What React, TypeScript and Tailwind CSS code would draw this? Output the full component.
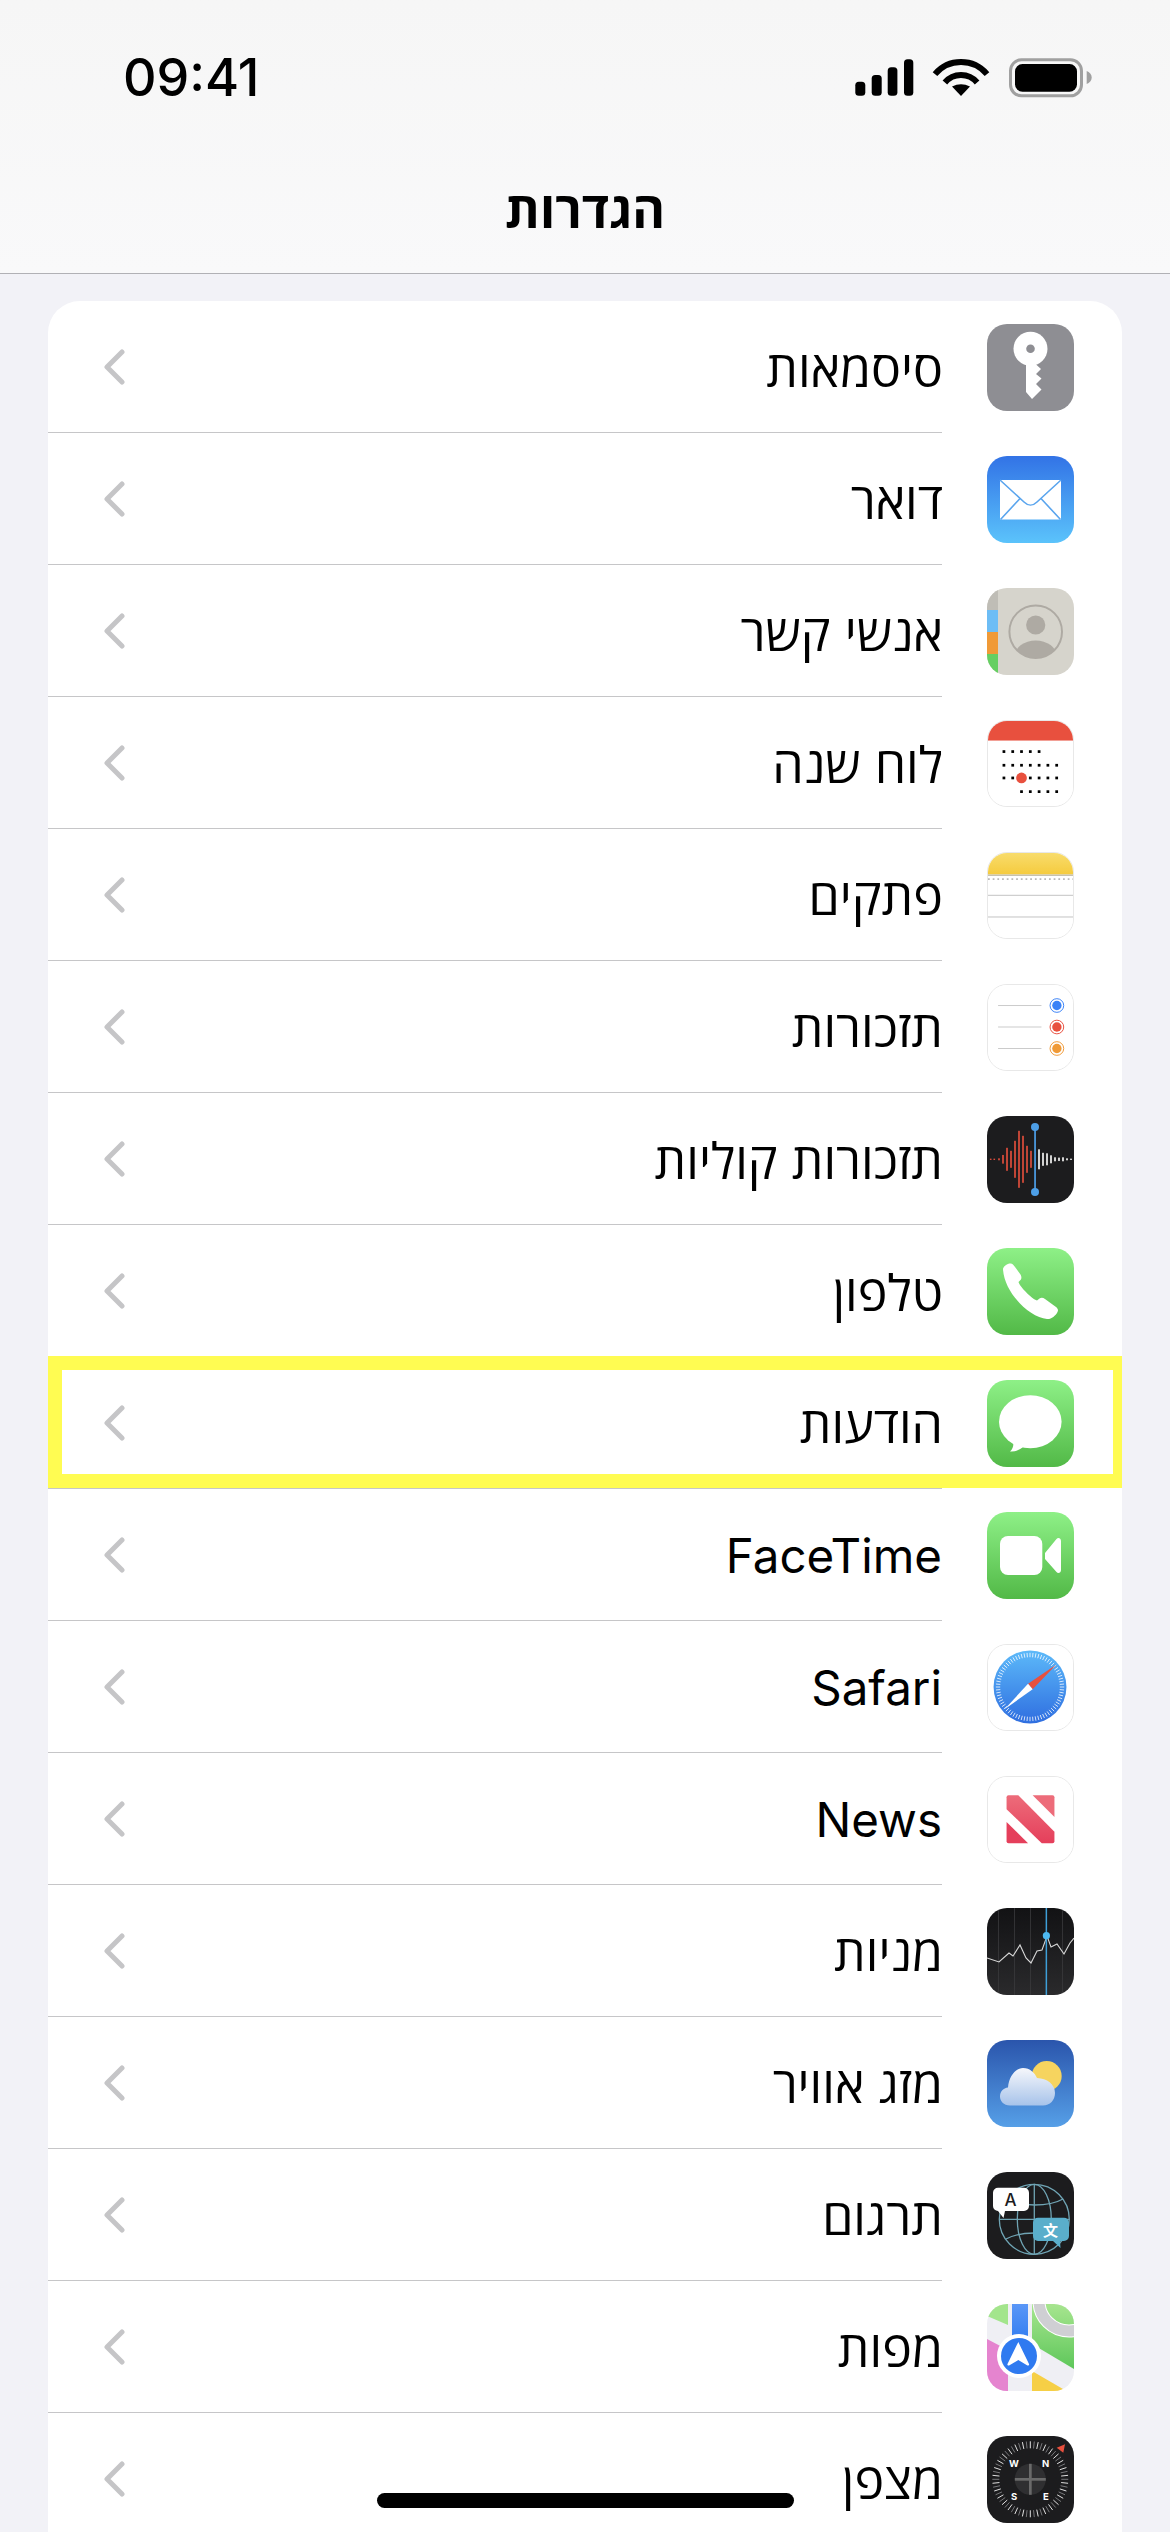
import type { ReactNode } from "react";

function Tile({ children, className }: { children: ReactNode; className?: string }) {
  return (
    <svg viewBox="0 0 87 87" className={`h-[87px] w-[87px] shrink-0 rounded-[20px] ${className ?? ""}`}>
      {children}
    </svg>
  );
}

function Grad({ id, from, to }: { id: string; from: string; to: string }) {
  return (
    <defs>
      <linearGradient id={id} x1="0" y1="0" x2="0" y2="1">
        <stop offset="0" stopColor={from} />
        <stop offset="1" stopColor={to} />
      </linearGradient>
    </defs>
  );
}

function radial(angle: number, r: number, cx = 43.4, cy = 43.4) {
  const a = (angle * Math.PI) / 180;
  return { x: cx + Math.sin(a) * r, y: cy - Math.cos(a) * r };
}

function Ticks({ count, inner, outer, cx, cy, color, width, dim }: { count: number; inner: number; outer: number; cx: number; cy: number; color: string; width: number; dim?: string }) {
  return (
    <>
      {Array.from({ length: count }, (_, i) => {
        const angle = (i * 360) / count;
        const a = radial(angle, inner, cx, cy);
        const b = radial(angle, outer, cx, cy);
        return <line key={i} x1={a.x} y1={a.y} x2={b.x} y2={b.y} stroke={dim && i % 2 ? dim : color} strokeWidth={width} />;
      })}
    </>
  );
}

function PasswordsIcon() {
  return (
    <Tile>
      <rect width="87" height="87" fill="#8e8e93" />
      <circle cx="43.5" cy="24.7" r="17" fill="#fff" />
      <circle cx="43.5" cy="24.7" r="4.3" fill="#8e8e93" />
      <path d="M39 36 V68 L45 75 L54.5 65.5 L49 60 L54.5 54.5 L49 50 L54 45 L48.5 40 V36 Z" fill="#fff" />
    </Tile>
  );
}

function MailIcon() {
  return (
    <Tile>
      <Grad id="mail" from="#3273e6" to="#5bc3fb" />
      <rect width="87" height="87" fill="url(#mail)" />
      <rect x="13" y="24" width="61" height="39.5" fill="#fff" />
      <path d="M13 24 L37 46 C41 50 46 50 50 46 L74 24" fill="none" stroke="#5aa5ee" strokeWidth="1.6" />
      <path d="M13.5 63.5 L33 42.5 M73.5 63.5 L54 42.5" fill="none" stroke="#5aa5ee" strokeWidth="1.6" />
    </Tile>
  );
}

function ContactsIcon() {
  return (
    <Tile>
      <defs>
        <clipPath id="contact-circle">
          <circle cx="48.7" cy="43.7" r="26" />
        </clipPath>
      </defs>
      <rect width="87" height="87" fill="#d6d4cc" />
      <rect width="11" height="22" fill="#bfbdb6" />
      <rect y="22" width="11" height="22" fill="#6dbdf5" />
      <rect y="44" width="11" height="22" fill="#f09a37" />
      <rect y="66" width="11" height="21" fill="#66cf62" />
      <circle cx="48.7" cy="43.7" r="26.3" fill="none" stroke="#aeaaa3" strokeWidth="2" />
      <circle cx="48.7" cy="37" r="9.6" fill="#aeaaa3" />
      <ellipse cx="48.7" cy="68" rx="21" ry="15.5" fill="#aeaaa3" clipPath="url(#contact-circle)" />
    </Tile>
  );
}

function CalendarIcon() {
  const xs = [16.3, 25.3, 34.3, 43.3, 52.3, 61.3, 70.3];
  const dots: [number, number[]][] = [
    [31.3, [0, 1, 2, 3, 4]],
    [45.3, [0, 1, 2, 3, 4, 5, 6]],
    [58.3, [0, 1, 3, 4, 5, 6]],
    [72.3, [2, 3, 4, 5, 6]],
  ];
  return (
    <Tile className="border border-[#e8e8e8]">
      <rect width="87" height="87" fill="#fff" />
      <rect width="87" height="20" fill="#e8503e" />
      {dots.map(([y, cols]) => cols.map((c) => <rect key={`${y}-${c}`} x={xs[c] - 1.4} y={y - 1.4} width="2.8" height="2.8" fill="#000" />))}
      <circle cx="34.3" cy="58.3" r="5.5" fill="#e8503e" />
    </Tile>
  );
}

function NotesIcon() {
  return (
    <Tile className="border border-[#e8e8e8]">
      <Grad id="notes" from="#f8dc6c" to="#f5cb3e" />
      <rect width="87" height="87" fill="#fff" />
      <rect width="87" height="22" fill="url(#notes)" />
      <rect y="22" width="87" height="1.5" fill="#c4c0ac" />
      <line x1="0" y1="26.7" x2="87" y2="26.7" stroke="#b8b8b8" strokeWidth="1.8" strokeDasharray="1.8 3" />
      <line x1="0" y1="43.3" x2="87" y2="43.3" stroke="#bbb" strokeWidth="0.9" />
      <line x1="0" y1="65.5" x2="87" y2="65.5" stroke="#bbb" strokeWidth="0.9" />
    </Tile>
  );
}

function RemindersIcon() {
  const items: [number, string][] = [
    [21, "#3a82f7"],
    [43, "#e8503e"],
    [65, "#f09a37"],
  ];
  return (
    <Tile className="border border-[#e8e8e8]">
      <rect width="87" height="87" fill="#fff" />
      {items.map(([y, color]) => (
        <g key={y}>
          <line x1="10.3" y1={y} x2="54.7" y2={y} stroke="#c4c4c4" strokeWidth="0.9" />
          <circle cx="70.5" cy={y} r="7" fill="none" stroke={color} strokeWidth="1" />
          <circle cx="70.5" cy={y} r="4.8" fill={color} />
        </g>
      ))}
    </Tile>
  );
}

function VoiceMemosIcon() {
  const red: [number, number][] = [[3.7, 1.3], [7.3, 1.3], [12, 2], [16, 8.7], [20, 23], [24, 17], [28, 37], [32, 57], [36, 47], [40, 27], [44, 17]];
  const white: [number, number][] = [[52, 20], [56, 13], [60, 12], [64, 8], [68, 4], [72, 3.3], [76, 4], [80, 2], [84, 1.3]];
  return (
    <Tile>
      <rect width="87" height="87" fill="#1c1c1e" />
      {red.map(([x, h]) => <rect key={x} x={x - 0.8} y={43.3 - h / 2} width="1.6" height={h} fill="#e8503e" />)}
      {white.map(([x, h]) => <rect key={x} x={x - 0.8} y={43.3 - h / 2} width="1.6" height={h} fill="#fff" />)}
      <rect x="47.2" y="11" width="1.7" height="65" fill="#4d9fe8" />
      <circle cx="48" cy="11" r="4" fill="#4d9fe8" />
      <circle cx="48" cy="76" r="4" fill="#4d9fe8" />
    </Tile>
  );
}

function PhoneIcon() {
  return (
    <Tile>
      <Grad id="phone" from="#8ef087" to="#52b947" />
      <rect width="87" height="87" fill="url(#phone)" />
      <path d="M16 21 C16.5 18 21 15 24 15.5 C26 16 27 17.5 28 19 L33.5 26.5 C35 29 34.5 31 33 32.5 L31.5 34 C33 39 45 51 50 52.5 L52.5 50.5 C54 49.5 56 49.5 58 51 L69 59 C71 60.5 71.5 62.5 70.5 64 C68.5 68 64 71.5 60 71 C42 69.5 17 44 16 21 Z" fill="#fff" />
    </Tile>
  );
}

function MessagesIcon() {
  return (
    <Tile>
      <Grad id="messages" from="#8ef087" to="#52b947" />
      <rect width="87" height="87" fill="url(#messages)" />
      <ellipse cx="43.3" cy="41.7" rx="31.3" ry="26.5" fill="#fff" />
      <path d="M26 60 C27 65 26 69 23 71.5 C28 72 33 70 37 66 Z" fill="#fff" />
    </Tile>
  );
}

function FaceTimeIcon() {
  return (
    <Tile>
      <Grad id="facetime" from="#8ef087" to="#52b947" />
      <rect width="87" height="87" fill="url(#facetime)" />
      <rect x="13" y="24" width="42.3" height="39" rx="8" fill="#fff" />
      <path d="M58 41 L69.5 27 C71 25 74 26 74 29 V58 C74 61 71 62 69.5 60 L58 47 Z" fill="#fff" />
    </Tile>
  );
}

function SafariIcon() {
  return (
    <Tile className="border border-[#e8e8e8]">
      <Grad id="safari" from="#5cb9f9" to="#2f6ee0" />
      <rect width="87" height="87" fill="#fff" />
      <circle cx="43" cy="43" r="37.3" fill="url(#safari)" />
      <Ticks count={72} inner={30.5} outer={35} cx={43} cy={43} color="#fff" width={0.8} />
      <path d="M41 39.7 L69.7 20.3 L45.7 45.3 Z" fill="#e8503e" />
      <path d="M41 39.7 L17 65.7 L45.7 45.3 Z" fill="#fff" />
    </Tile>
  );
}

function NewsIcon() {
  return (
    <Tile className="border border-[#e8e8e8]">
      <Grad id="news" from="#ed6c7a" to="#e53f5b" />
      <rect width="87" height="87" fill="#fff" />
      <path d="M21 18.7 H31 L68 56 V65.7 A2 2 0 0 1 66 67.7 H55 L19 33 V20.7 A2 2 0 0 1 21 18.7 Z" fill="url(#news)" />
      <path d="M45.7 18.7 H66 A2 2 0 0 1 68 20.7 V41 Z" fill="#ed6c7a" />
      <path d="M19 46 L41 67.7 H21 A2 2 0 0 1 19 65.7 Z" fill="#e53f5b" />
    </Tile>
  );
}

function StocksIcon() {
  const line = "0,50 12,54 22,45 26,48 33,37 39,50 44,55 50,43 55,42 60,28 64,39 70,36 77,46 83,35 87,30";
  return (
    <Tile>
      <Grad id="stocks" from="#121214" to="#2a2a2c" />
      <rect width="87" height="87" fill="url(#stocks)" />
      {[11.5, 27.5, 43.5, 75.5].map((x) => <line key={x} x1={x} y1="0" x2={x} y2="87" stroke="#3a3a3c" strokeWidth="0.8" />)}
      <polyline points={line} fill="none" stroke="#d8d8d8" strokeWidth="1.1" />
      <rect x="58.6" y="0" width="1.5" height="87" fill="#3e9fd8" />
      <circle cx="59.4" cy="27.7" r="3.6" fill="#4db8f0" />
    </Tile>
  );
}

function WeatherIcon() {
  return (
    <Tile>
      <Grad id="weather" from="#2a55ac" to="#569fe7" />
      <Grad id="cloud" from="#f6f7fb" to="#a7c3ea" />
      <rect width="87" height="87" fill="url(#weather)" />
      <circle cx="59.7" cy="36" r="15" fill="#f6d45f" />
      <path d="M23 65.5 C16.5 65.5 13 61 13 56.5 C13 51.5 16.5 48 21 47.5 C22 36 29 28 36 28 C43 28 48 33 50 38 C60 38.5 68 44 68 53 C68 60 63 65.5 56 65.5 Z" fill="url(#cloud)" />
    </Tile>
  );
}

function TranslateIcon() {
  return (
    <Tile>
      <rect width="87" height="87" fill="#1c1c1e" />
      <g fill="none" stroke="#6fa4b4" strokeWidth="1.3">
        <circle cx="47.3" cy="47.3" r="35" />
        <ellipse cx="47.3" cy="47.3" rx="17" ry="35" />
        <line x1="47.3" y1="12.3" x2="47.3" y2="82.3" />
        <line x1="12.3" y1="47.3" x2="82.3" y2="47.3" />
        <path d="M19 27 C33 35 62 35 76 27 M19 67 C33 59 62 59 76 67" />
      </g>
      <path d="M11 15.7 H37 A5 5 0 0 1 42 20.7 V34 A5 5 0 0 1 37 39 H18 L16.5 46 L11 39 A5 5 0 0 1 6 34 V20.7 A5 5 0 0 1 11 15.7 Z" fill="#fff" />
      <text x="23.5" y="34" textAnchor="middle" fontSize="17" fontWeight="500" fill="#1c1c1e" fontFamily="Inter, sans-serif">A</text>
      <path d="M51 45.7 H77 A5 5 0 0 1 82 50.7 V64 A5 5 0 0 1 77 69 L73 69 L73.5 76 L66 69 H51 A5 5 0 0 1 46 64 V50.7 A5 5 0 0 1 51 45.7 Z" fill="#5aaecb" />
      <text x="63.5" y="64" textAnchor="middle" fontSize="15" fontWeight="700" fill="#fff" fontFamily="'Noto Sans CJK SC', sans-serif">文</text>
    </Tile>
  );
}

function MapsIcon() {
  return (
    <Tile>
      <Grad id="maps-green" from="#a7e58f" to="#5ec75a" />
      <Grad id="maps-road" from="#5a97f7" to="#2f7af0" />
      <defs>
        <clipPath id="maps-right">
          <path d="M45 0 H87 V65 L45 40 Z" />
        </clipPath>
      </defs>
      <rect width="87" height="87" fill="#efeff4" />
      <path d="M3 0 H21 V21 L0 12 V3 Z" fill="#a3e58c" />
      <path d="M45 0 H87 V65 L45 40 Z" fill="url(#maps-green)" />
      <g clipPath="url(#maps-right)">
        <circle cx="82" cy="-3" r="30" fill="none" stroke="#fff" strokeWidth="13" />
        <circle cx="82" cy="-3" r="30" fill="none" stroke="#cfcfd3" strokeWidth="11" />
      </g>
      <path d="M0 35 L21 46 V87 H0 Z" fill="#e584cf" />
      <path d="M45 67 L76 85 V87 H45 Z" fill="#f6cf45" />
      <rect x="25" y="0" width="16" height="40" fill="url(#maps-road)" />
      <circle cx="32" cy="52" r="22" fill="#fff" />
      <circle cx="32" cy="52" r="18" fill="#2f7af0" />
      <path d="M31.3 38 L42 60 C42.5 61.5 41 62 40 61.3 L31.3 56 L22.5 61.3 C21.5 62 20 61.5 20.5 60 Z" fill="#fff" />
    </Tile>
  );
}

function CompassIcon() {
  return (
    <Tile>
      <rect width="87" height="87" fill="#1c1c1e" />
      <Ticks count={60} inner={31} outer={38} cx={43.3} cy={43.3} color="#e0e0e0" width={1} dim="#77777a" />
      <circle cx="43.3" cy="43.3" r="15.5" fill="#2f2f31" />
      <rect x="27.8" y="42" width="31" height="2.7" fill="#6a6a6a" />
      <rect x="42" y="27.8" width="2.7" height="31" fill="#6a6a6a" />
      <g fontFamily="Inter, sans-serif" fontSize="9.5" fontWeight="700" fill="#fff" textAnchor="middle">
        <text x="27" y="30.5">W</text>
        <text x="58.7" y="30.5">N</text>
        <text x="27" y="63.5">S</text>
        <text x="59" y="63.5">E</text>
      </g>
      <path d="M69.7 11.7 L78 8.3 L76.3 16.7 Z" fill="#e8503e" />
    </Tile>
  );
}

function Chevron() {
  return (
    <svg width="21" height="36" viewBox="0 0 21 36" fill="none" className="shrink-0">
      <path d="M18 3 L3 18 L18 33" stroke="#c5c5c7" strokeWidth="5" strokeLinecap="round" strokeLinejoin="round" />
    </svg>
  );
}

const rows: { label: string; icon: ReactNode; latin?: boolean; highlighted?: boolean }[] = [
  { label: "סיסמאות", icon: <PasswordsIcon /> },
  { label: "דואר", icon: <MailIcon /> },
  { label: "אנשי קשר", icon: <ContactsIcon /> },
  { label: "לוח שנה", icon: <CalendarIcon /> },
  { label: "פתקים", icon: <NotesIcon /> },
  { label: "תזכורות", icon: <RemindersIcon /> },
  { label: "תזכורות קוליות", icon: <VoiceMemosIcon /> },
  { label: "טלפון", icon: <PhoneIcon /> },
  { label: "הודעות", icon: <MessagesIcon />, highlighted: true },
  { label: "FaceTime", icon: <FaceTimeIcon />, latin: true },
  { label: "Safari", icon: <SafariIcon />, latin: true },
  { label: "News", icon: <NewsIcon />, latin: true },
  { label: "מניות", icon: <StocksIcon /> },
  { label: "מזג אוויר", icon: <WeatherIcon /> },
  { label: "תרגום", icon: <TranslateIcon /> },
  { label: "מפות", icon: <MapsIcon /> },
  { label: "מצפן", icon: <CompassIcon /> },
];

function StatusIcons() {
  return (
    <svg width="238" height="40" viewBox="0 0 238 40" fill="none">
      <rect x="1.3" y="23.7" width="10" height="14" rx="3.5" fill="#000" />
      <rect x="17.7" y="17" width="10" height="20.7" rx="3.5" fill="#000" />
      <rect x="33.7" y="9.3" width="9.7" height="28.4" rx="3.5" fill="#000" />
      <rect x="50" y="1.3" width="9.3" height="36.4" rx="3.5" fill="#000" />
      <path d="M81 16.1 A34 34 0 0 1 133 16.1" stroke="#000" strokeWidth="6" />
      <path d="M90.9 24.5 A21 21 0 0 1 123.1 24.5" stroke="#000" strokeWidth="6" />
      <path d="M107 38 L98 28.5 Q107 24 116 28.5 Z" fill="#000" />
      <rect x="156.5" y="1.8" width="71" height="36" rx="11" stroke="#a0a0a0" strokeWidth="3" />
      <rect x="161" y="6" width="62" height="27.7" rx="7.5" fill="#000" />
      <path d="M232.7 13 C235.5 14 237.7 16.5 237.7 19.5 C237.7 22.5 235.5 25 232.7 26 Z" fill="#a0a0a0" />
    </svg>
  );
}

export default function App() {
  return (
    <div className="relative h-[2532px] w-[1170px] overflow-hidden bg-[#f2f2f7] font-['Inter','Open_Sans',sans-serif] text-black">
      <header className="flex h-[274px] flex-col border-b border-[#b1b1b5] bg-gradient-to-b from-[#f6f6f6] to-[#f9f9fa]">
        <div className="flex items-start justify-between pl-[123px] pr-[78px] pt-[58px]">
          <span className="text-[52px] font-medium leading-[40px]">09:41</span>
          <StatusIcons />
        </div>
        <h1 dir="rtl" className="mt-[84px] text-center text-[50px] font-bold leading-[56px]">הגדרות</h1>
      </header>

      <main className="px-[48px] pt-[27px]">
        <div className="overflow-hidden rounded-t-[32px] bg-white">
          {rows.map((row) => (
            <div key={row.label} dir="rtl" className="relative flex h-[132px] items-center ps-[48px]">
              {row.icon}
              <div className="ms-[45px] flex h-full flex-1 items-center justify-between border-b border-[#c6c6c8] pe-[56px]">
                <span className={row.latin ? "pt-[2px] text-[47.5px] leading-[56px]" : "-ms-[1px] pt-[5px] text-[50px] leading-[56px]"}>{row.label}</span>
                <Chevron />
              </div>
              {row.highlighted && (
                <div className="absolute inset-x-0 -top-px h-[132px] border-y-[14px] border-l-[14px] border-r-[9px] border-[#fffc52]" />
              )}
            </div>
          ))}
        </div>
      </main>

      <div className="absolute bottom-[24px] left-[377px] h-[15px] w-[417px] rounded-full bg-black" />
    </div>
  );
}
